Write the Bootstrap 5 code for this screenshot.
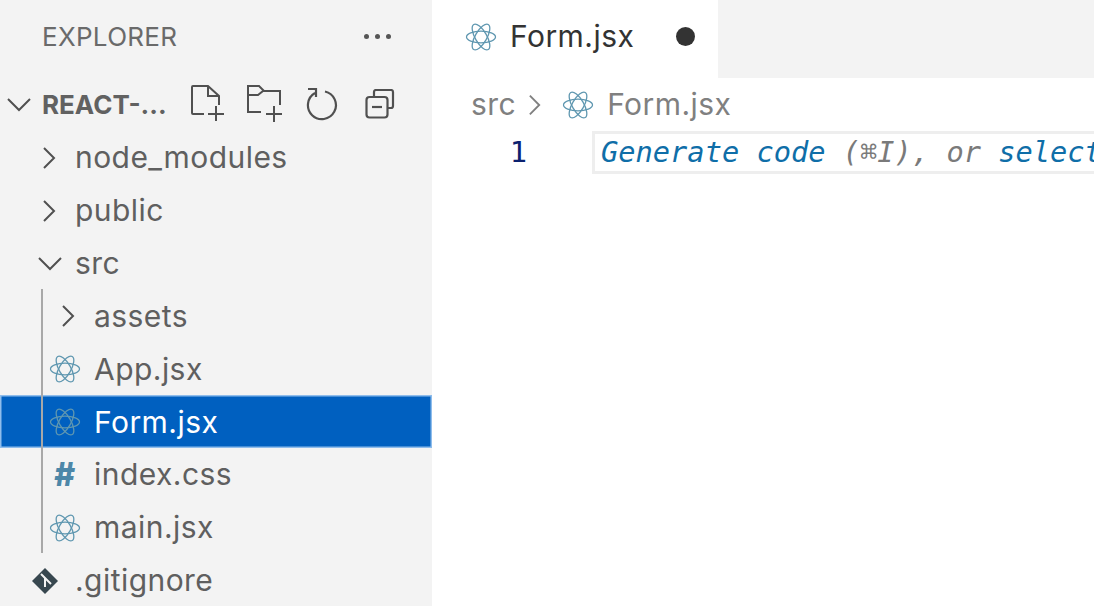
<!DOCTYPE html>
<html lang="en">

<head>
    <meta charset="UTF-8">
    <title>Form.jsx - Explorer</title>
    <link rel="stylesheet" href="https://cdn.jsdelivr.net/npm/bootstrap@5.3.3/dist/css/bootstrap.min.css">
    <style>
        html, body {
            height: 100%;
            overflow: hidden;
        }

        body {
            font-family: Inter, "Liberation Sans", sans-serif;
            background-color: #fff;
        }

        .side-panel {
            width: 432px;
            height: 606px;
            flex: none;
            background-color: #f3f3f3;
            color: #5f5f5f;
            overflow: hidden;
        }

        .panel-title {
            height: 78px;
            padding: 0 41px 5px 42px;
            font-size: 26px;
            letter-spacing: .3px;
            color: #6a6a6a;
        }

        .more-dots {
            gap: 6px;
        }

        .more-dots i {
            width: 5px;
            height: 5px;
            border-radius: 50%;
            background-color: #555;
        }

        .project-row {
            height: 53px;
            padding-left: 6px;
        }

        .project-name {
            font-size: 26px;
            font-weight: 700;
            width: 148px;
            margin-left: 10px;
            padding-top: 1px;
            color: #616161;
        }

        .tool-slot {
            width: 59px;
        }

        .tool-slot.first-slot {
            width: 57px;
        }

        .tree-row {
            height: 52.9px;
            padding-top: 2px;
            font-size: 30px;
            letter-spacing: .45px;
            white-space: nowrap;
            color: #5f5f5f;
        }

        .lvl-0 {
            padding-left: 37px;
        }

        .lvl-1 {
            padding-left: 49px;
        }

        .lvl-0 .icon-slot {
            width: 38px;
        }

        .lvl-1 .icon-slot {
            width: 45px;
        }

        .chev-closed {
            margin-left: 5px;
        }

        .chev-nested {
            margin-left: 12px;
        }

        .git-icon {
            margin-left: -6px;
        }

        .nested-rows {
            position: relative;
        }

        .nested-rows::before {
            content: "";
            position: absolute;
            left: 41px;
            top: 0;
            bottom: 0;
            width: 2px;
            background-color: #a8a8a8;
            z-index: 2;
        }

        .row-active {
            background-color: #0060c0;
            color: #fff;
            box-shadow: inset 0 0 0 1.5px #8fbdec;
        }

        .hash-icon {
            width: 32px;
            font-size: 32px;
            font-weight: 800;
            text-align: center;
            color: #4d87a8;
        }

        .editor-area {
            min-width: 0;
            overflow: hidden;
        }

        .tab-strip {
            height: 78px;
            background-color: #f3f3f3;
        }

        .open-tab {
            width: 286px;
            background-color: #fff;
            padding: 0 0 5px 33px;
            font-size: 30px;
            letter-spacing: .45px;
            color: #333;
        }

        .open-tab .tab-name {
            margin-left: 13px;
        }

        .dirty-dot {
            width: 19px;
            height: 19px;
            border-radius: 50%;
            background-color: #333;
            margin-left: 42px;
        }

        .crumbs {
            height: 53px;
            padding-left: 39px;
            font-size: 30px;
            letter-spacing: .45px;
            color: #808080;
        }

        .crumb-chevron {
            margin: 0 20px 0 12px;
        }

        .crumb-file {
            margin-left: 13px;
        }

        .code-line {
            height: 43px;
        }

        .line-no {
            width: 159px;
            flex: none;
            padding-right: 64px;
            text-align: right;
            font-family: "DejaVu Sans Mono", monospace;
            font-size: 28.7px;
            color: #0b216f;
        }

        .hint-box {
            flex: 1;
            height: 43px;
            margin-left: 1px;
            padding-left: 6px;
            border: 3px solid #eeeeee;
            border-right: 0;
            font-family: "DejaVu Sans Mono", monospace;
            font-size: 28.7px;
            font-style: italic;
            white-space: nowrap;
            color: #7a7a7a;
            overflow: hidden;
        }

        .hint-key {
            color: #0f6ea8;
        }
    </style>
</head>

<body>
    <svg width="0" height="0" class="d-block">
        <defs>
            <g id="atom" fill="none" stroke="#5f97b0" stroke-width="1.3">
                <ellipse cx="16" cy="16" rx="14.5" ry="5.8"/>
                <ellipse cx="16" cy="16" rx="14.5" ry="5.8" transform="rotate(60 16 16)"/>
                <ellipse cx="16" cy="16" rx="14.5" ry="5.8" transform="rotate(120 16 16)"/>
            </g>
            <path id="chev-r" d="M2 2 L12 12 L2 22" fill="none" stroke="#505050" stroke-width="2"/>
            <path id="chev-d" d="M2 2 L13 13 L24 2" fill="none" stroke="#505050" stroke-width="2"/>
        </defs>
    </svg>

    <div class="d-flex">
        <aside class="side-panel d-flex flex-column">
            <div class="panel-title d-flex align-items-center justify-content-between">
                <span>EXPLORER</span>
                <span class="more-dots d-flex"><i></i><i></i><i></i></span>
            </div>

            <div class="project-row d-flex align-items-center">
                <svg width="26" height="15" viewBox="0 0 26 15"><use href="#chev-d"/></svg>
                <span class="project-name">REACT-...</span>
                <span class="d-flex align-items-center">
                    <span class="tool-slot first-slot d-flex">
                        <svg width="36" height="38" viewBox="0 0 36 38" fill="none" stroke="#505050" stroke-width="2">
                            <path d="M14 29 H3 a1 1 0 0 1 -1 -1 V2 a1 1 0 0 1 1 -1 H18 L29 11 V20 M18 1 V11 H29"/>
                            <path d="M18 29 H34 M26 21 V36"/>
                        </svg>
                    </span>
                    <span class="tool-slot d-flex">
                        <svg width="36" height="38" viewBox="0 0 36 38" fill="none" stroke="#505050" stroke-width="2">
                            <path d="M14 27 H1 V1 H12 L17 6 H33 V20 M1 10 H11 L16 6"/>
                            <path d="M19 29 H35 M27 21 V37"/>
                        </svg>
                    </span>
                    <span class="tool-slot d-flex">
                        <svg width="32" height="34" viewBox="0 0 32 34" fill="none" stroke="#505050" stroke-width="2.2">
                            <path d="M9 6 A14 14 0 1 0 19 4.5 M2 2 H10 V10"/>
                        </svg>
                    </span>
                    <svg width="30" height="30" viewBox="0 0 30 30" fill="none" stroke="#505050" stroke-width="2.2">
                        <path d="M9 7 V3 a2 2 0 0 1 2 -2 H26 a2 2 0 0 1 2 2 V17 a2 2 0 0 1 -2 2 H23"/>
                        <rect x="1.5" y="8" width="21" height="20.5" rx="3"/>
                        <path d="M7 18 H17"/>
                    </svg>
                </span>
            </div>

            <div class="tree-row lvl-0 d-flex align-items-center">
                <span class="icon-slot d-flex"><svg class="chev-closed" width="15" height="24" viewBox="0 0 15 24"><use href="#chev-r"/></svg></span>
                <span>node_modules</span>
            </div>
            <div class="tree-row lvl-0 d-flex align-items-center">
                <span class="icon-slot d-flex"><svg class="chev-closed" width="15" height="24" viewBox="0 0 15 24"><use href="#chev-r"/></svg></span>
                <span>public</span>
            </div>
            <div class="tree-row lvl-0 d-flex align-items-center">
                <span class="icon-slot d-flex"><svg width="26" height="15" viewBox="0 0 26 15"><use href="#chev-d"/></svg></span>
                <span>src</span>
            </div>

            <div class="nested-rows">
                <div class="tree-row lvl-1 d-flex align-items-center">
                    <span class="icon-slot d-flex"><svg class="chev-nested" width="15" height="24" viewBox="0 0 15 24"><use href="#chev-r"/></svg></span>
                    <span>assets</span>
                </div>
                <div class="tree-row lvl-1 d-flex align-items-center">
                    <span class="icon-slot d-flex"><svg width="32" height="32" viewBox="0 0 32 32"><use href="#atom"/></svg></span>
                    <span>App.jsx</span>
                </div>
                <div class="tree-row lvl-1 row-active d-flex align-items-center">
                    <span class="icon-slot d-flex"><svg width="32" height="32" viewBox="0 0 32 32"><use href="#atom"/></svg></span>
                    <span>Form.jsx</span>
                </div>
                <div class="tree-row lvl-1 d-flex align-items-center">
                    <span class="icon-slot d-flex"><span class="hash-icon">#</span></span>
                    <span>index.css</span>
                </div>
                <div class="tree-row lvl-1 d-flex align-items-center">
                    <span class="icon-slot d-flex"><svg width="32" height="32" viewBox="0 0 32 32"><use href="#atom"/></svg></span>
                    <span>main.jsx</span>
                </div>
            </div>

            <div class="tree-row lvl-0 d-flex align-items-center">
                <span class="icon-slot d-flex">
                    <svg class="git-icon" width="28" height="28" viewBox="0 0 28 28">
                        <path d="M14 1 L27 14 L14 27 L1 14 Z" fill="#37474f"/>
                        <path d="M10 7 L20 17 M14 11 V20" stroke="#f3f3f3" stroke-width="2" fill="none"/>
                    </svg>
                </span>
                <span>.gitignore</span>
            </div>
        </aside>

        <main class="editor-area flex-grow-1">
            <div class="tab-strip d-flex">
                <div class="open-tab d-flex align-items-center">
                    <svg width="32" height="32" viewBox="0 0 32 32"><use href="#atom"/></svg>
                    <span class="tab-name">Form.jsx</span>
                    <span class="dirty-dot"></span>
                </div>
            </div>
            <div class="crumbs d-flex align-items-center">
                <span>src</span>
                <svg class="crumb-chevron" width="14" height="24" viewBox="0 0 15 24"><path d="M2 2 L12 12 L2 22" fill="none" stroke="#808080" stroke-width="2"/></svg>
                <svg width="32" height="32" viewBox="0 0 32 32"><use href="#atom"/></svg>
                <span class="crumb-file">Form.jsx</span>
            </div>
            <div class="code-line d-flex align-items-center">
                <span class="line-no">1</span>
                <div class="hint-box d-flex align-items-center">
                    <span><span class="hint-key">Generate code</span> (⌘I), or <span class="hint-key">select</span></span>
                </div>
            </div>
        </main>
    </div>
</body>

</html>
